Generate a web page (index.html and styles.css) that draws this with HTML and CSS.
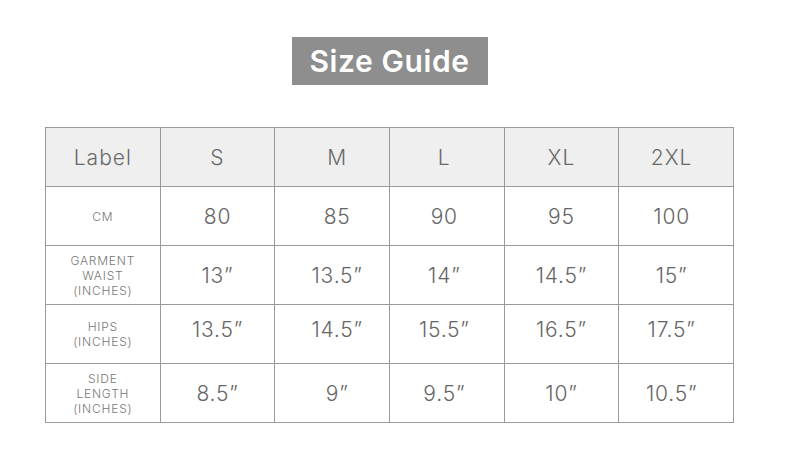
FILE: index.html
```html
<!DOCTYPE html>
<html>
<head>
<meta charset="utf-8">
<link rel="stylesheet" href="styles.css">
</head>
<body>
<div class="page">
  <h1 class="title">Size Guide</h1>
  <table class="sizes">
    <thead>
      <tr><th class="lab">Label</th><th>S</th><th>M</th><th>L</th><th>XL</th><th>2XL</th></tr>
    </thead>
    <tbody>
      <tr><td class="lab">CM</td><td>80</td><td>85</td><td>90</td><td>95</td><td>100</td></tr>
      <tr><td class="lab">GARMENT<br>WAIST<br>(INCHES)</td><td>13”</td><td>13.5”</td><td>14”</td><td>14.5”</td><td>15”</td></tr>
      <tr><td class="lab">HIPS<br>(INCHES)</td><td class="up">13.5”</td><td class="up">14.5”</td><td class="up">15.5”</td><td class="up">16.5”</td><td class="up">17.5”</td></tr>
      <tr><td class="lab">SIDE<br>LENGTH<br>(INCHES)</td><td>8.5”</td><td>9”</td><td>9.5”</td><td>10”</td><td>10.5”</td></tr>
    </tbody>
  </table>
</div>
</body>
</html>
```
FILE: styles.css
```css
html, body { margin: 0; padding: 0; background: #fff; }
body { font-family: "Inter", "Liberation Sans", sans-serif; color: #666; }
.page { width: 779px; padding-top: 37px; display: flex; flex-direction: column; align-items: center; }
.title {
  margin: 0;
  width: 196px; height: 48px;
  box-sizing: border-box;
  background: #8e8e8e; color: #fff;
  font-size: 30px; font-weight: 600;
  display: flex; align-items: center; justify-content: center;
  letter-spacing: 0.6px;
}
.sizes {
  margin-top: 42px;
  border-collapse: collapse;
  table-layout: fixed;
  width: 689px;
}
.sizes th, .sizes td {
  border: 1px solid #9a9a9a;
  height: 58px;
  padding: 0;
  text-align: center;
  vertical-align: middle;
  font-weight: 300;
}
.sizes th {
  background: #efefef;
  font-size: 21px;
  color: #6a6a6a;
  letter-spacing: 1px;
}
.sizes td { font-size: 21px; color: #666; letter-spacing: 0.8px; }
.sizes td.lab { font-size: 12px; line-height: 15px; color: #777; letter-spacing: 0.8px; }
.sizes td.up { height: 48px; padding-bottom: 10px; }
.sizes th:nth-child(3), .sizes td:nth-child(3) { padding-left: 10px; }
.sizes th:nth-child(4), .sizes td:nth-child(4) { padding-right: 5px; }
.sizes th:nth-child(6), .sizes td:nth-child(6) { padding-right: 9px; }
```
